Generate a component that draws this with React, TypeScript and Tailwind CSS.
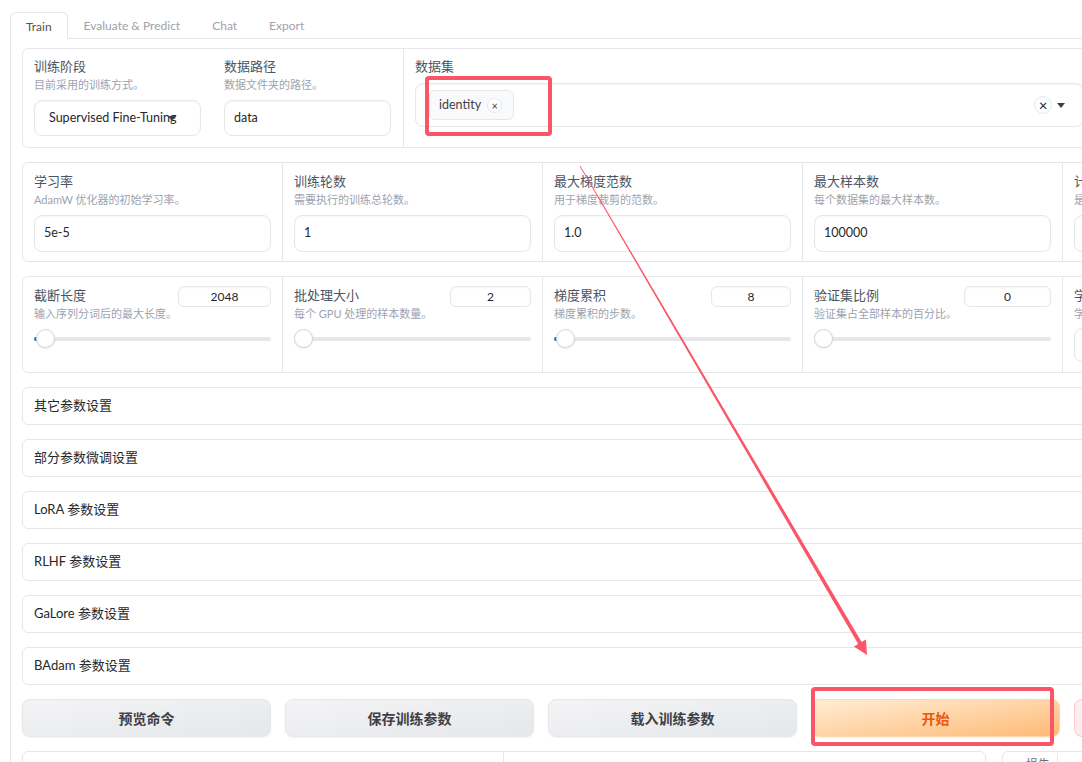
import React from "react";

function Label({ children }: { children: React.ReactNode }) {
  return <div className="h-5 leading-5 text-[13px] text-[#4b5563] whitespace-nowrap">{children}</div>;
}

function Desc({ children }: { children: React.ReactNode }) {
  return <div className="h-[17px] leading-[17px] text-[11px] text-[#9ca3af] whitespace-nowrap">{children}</div>;
}

function Caret() {
  return (
    <svg width="8" height="5" viewBox="0 0 8 5" className="shrink-0">
      <polygon points="0,0 8,0 4,5" fill="#3f3f46" />
    </svg>
  );
}

function TextCol({ label, desc, value, dropdown }: { label: string; desc: string; value: string; dropdown?: boolean }) {
  return (
    <div className="flex-1 min-w-0 px-[11px] pt-[8px]">
      <Label>{label}</Label>
      <Desc>{desc}</Desc>
      <div
        className={
          "mt-[7px] h-[37px] rounded-lg border border-[#e5e7eb] shadow-[inset_0_1px_2px_rgba(0,0,0,0.04)] flex items-center text-[12.5px] text-[#27272a] whitespace-nowrap overflow-hidden " +
          (dropdown ? "px-[14px]" : "px-[9px]")
        }
      >
        {value}
      </div>
    </div>
  );
}

function SliderCol({ label, desc, value, w, fill }: { label: string; desc: string; value: string; w: string; fill?: boolean }) {
  return (
    <div className="flex-1 min-w-0 px-[11px] pt-[8px]">
      <div className="flex justify-between h-5">
        <Label>{label}</Label>
        <div
          className={
            "mt-px h-[21px] rounded-md border border-[#e5e7eb] shadow-[inset_0_1px_2px_rgba(0,0,0,0.04)] flex items-center justify-center text-[12px] text-[#27272a] " +
            w
          }
        >
          {value}
        </div>
      </div>
      <Desc>{desc}</Desc>
      <div className="mt-[7px] h-[19px] relative flex items-center">
        <div className="h-[4px] w-full rounded-full bg-[#e5e7eb]" />
        {fill ? <div className="absolute left-0 top-[7.5px] h-[4px] w-[5px] rounded-l-full bg-[#2563eb]" /> : null}
        <div
          className={
            "absolute top-0 h-[19px] w-[19px] rounded-full bg-white border border-[#d1d5db] shadow-[0_1px_2px_rgba(0,0,0,0.08)] " +
            (fill ? "left-[2px]" : "left-0")
          }
        />
      </div>
    </div>
  );
}

function Accordion({ title }: { title: string }) {
  return (
    <div className="h-[38px] rounded-md border border-[#e5e7eb] flex items-center pl-[11px] text-[13px] text-[#27272a] bg-white">
      {title}
    </div>
  );
}

export default function App() {
  return (
    <div className="relative w-[1082px] h-[762px] overflow-hidden bg-white font-['Lato','Noto_Sans_CJK_SC',sans-serif]">
      <div className="w-[1400px] pt-[12px] pl-[10px]">
        {/* Tabs */}
        <div className="flex h-[27px] border-b border-[#e5e7eb] text-[12px]">
          <div className="self-start h-[27px] px-[15px] flex items-center pt-px border border-b-0 border-[#e5e7eb] rounded-t-[6px] bg-white text-[#57534e]">
            Train
          </div>
          <div className="h-[26px] px-4 pt-px flex items-center text-[#a1a1aa]">Evaluate &amp; Predict</div>
          <div className="h-[26px] px-4 pt-px flex items-center text-[#a1a1aa]">Chat</div>
          <div className="h-[26px] px-4 pt-px flex items-center text-[#a1a1aa]">Export</div>
        </div>

        {/* Panel */}
        <div className="border-l border-[#e5e7eb] pl-[11px] pt-[9px] h-[740px]">
          <div className="w-[1301px] flex flex-col gap-[14px]">
            {/* Row 1 */}
            <div className="flex h-[100px] rounded-md border border-[#e5e7eb]">
              <div className="w-[189px] pl-[11px] pt-[7px]">
                <Label>训练阶段</Label>
                <Desc>目前采用的训练方式。</Desc>
                <div className="relative mt-[7px] h-[36px] w-[167px] rounded-lg border border-[#e5e7eb] shadow-[inset_0_1px_2px_rgba(0,0,0,0.04)] flex items-center pl-[14px] text-[12.5px] text-[#27272a]">
                  <div className="w-[134px] overflow-hidden whitespace-nowrap">Supervised Fine-Tuning</div>
                  <div className="absolute right-[24px] top-[15px]">
                    <Caret />
                  </div>
                </div>
              </div>
              <div className="w-[191px] pl-[12px] pt-[7px]">
                <Label>数据路径</Label>
                <Desc>数据文件夹的路径。</Desc>
                <div className="mt-[7px] h-[36px] w-[167px] rounded-lg border border-[#e5e7eb] shadow-[inset_0_1px_2px_rgba(0,0,0,0.04)] flex items-center px-[9px] text-[12.5px] text-[#27272a]">
                  data
                </div>
              </div>
              <div className="w-[693px] border-l border-[#e5e7eb] pl-[11px] pr-[12px] pt-[7px]">
                <Label>数据集</Label>
                <div className="mt-[7px] h-[44px] rounded-lg border border-[#e5e7eb] shadow-[inset_0_1px_2px_rgba(0,0,0,0.04)] flex items-center justify-between pl-[13px] pr-[18px]">
                  <div className="h-[30px] flex items-center gap-[6px] pl-[9px] pr-[11px] rounded-md border border-[#e5e7eb] bg-[#f9fafb] text-[12.5px] text-[#3f3f46]">
                    <span>identity</span>
                    <span className="h-[15px] w-[15px] rounded-full border border-[#e5e7eb] bg-white flex items-center justify-center text-[11px] leading-none text-[#3f3f46]">
                      ×
                    </span>
                  </div>
                  <div className="flex items-center gap-[5px]">
                    <span className="h-[18px] w-[18px] rounded-full border border-[#e5e7eb] bg-white flex items-center justify-center text-[15px] leading-none text-[#27272a]">
                      ×
                    </span>
                    <Caret />
                  </div>
                </div>
              </div>
              <div className="flex-1 border-l border-[#e5e7eb]" />
            </div>

            {/* Row 2 */}
            <div className="flex h-[100px] rounded-md border border-[#e5e7eb] divide-x divide-[#e5e7eb]">
              <TextCol label="学习率" desc="AdamW 优化器的初始学习率。" value="5e-5" />
              <TextCol label="训练轮数" desc="需要执行的训练总轮数。" value="1" />
              <TextCol label="最大梯度范数" desc="用于梯度裁剪的范数。" value="1.0" />
              <TextCol label="最大样本数" desc="每个数据集的最大样本数。" value="100000" />
              <TextCol label="计算类型" desc="是否使用混合精度训练。" value="bf16" dropdown />
            </div>

            {/* Row 3 */}
            <div className="flex h-[97px] rounded-md border border-[#e5e7eb] divide-x divide-[#e5e7eb]">
              <SliderCol label="截断长度" desc="输入序列分词后的最大长度。" value="2048" w="w-[93px]" fill />
              <SliderCol label="批处理大小" desc="每个 GPU 处理的样本数量。" value="2" w="w-[81px]" />
              <SliderCol label="梯度累积" desc="梯度累积的步数。" value="8" w="w-[80px]" fill />
              <SliderCol label="验证集比例" desc="验证集占全部样本的百分比。" value="0" w="w-[87px]" />
              <div className="flex-1 min-w-0 px-[11px] pt-[8px]">
                <Label>学习率调节器</Label>
                <Desc>学习率调度器的名称。</Desc>
                <div className="mt-[6px] h-[34px] rounded-lg border border-[#e5e7eb] shadow-[inset_0_1px_2px_rgba(0,0,0,0.04)] flex items-center px-[14px] text-[12.5px] text-[#27272a]">
                  cosine
                </div>
              </div>
            </div>

            {/* Accordions */}
            <Accordion title="其它参数设置" />
            <Accordion title="部分参数微调设置" />
            <Accordion title="LoRA 参数设置" />
            <Accordion title="RLHF 参数设置" />
            <Accordion title="GaLore 参数设置" />
            <Accordion title="BAdam 参数设置" />

            {/* Buttons */}
            <div className="grid grid-cols-5 gap-[14px] h-[38px]">
              <button className="rounded-lg border border-[#e5e7eb] bg-gradient-to-br from-[#f4f4f5] to-[#e5e7eb] shadow-[0_1px_2px_rgba(0,0,0,0.05)] text-[14px] font-bold text-[#3f3f46]">
                预览命令
              </button>
              <button className="rounded-lg border border-[#e5e7eb] bg-gradient-to-br from-[#f4f4f5] to-[#e5e7eb] shadow-[0_1px_2px_rgba(0,0,0,0.05)] text-[14px] font-bold text-[#3f3f46]">
                保存训练参数
              </button>
              <button className="rounded-lg border border-[#e5e7eb] bg-gradient-to-br from-[#f4f4f5] to-[#e5e7eb] shadow-[0_1px_2px_rgba(0,0,0,0.05)] text-[14px] font-bold text-[#3f3f46]">
                载入训练参数
              </button>
              <button className="rounded-lg border border-[#fed7aa] bg-gradient-to-br from-[#ffedd5] to-[#fdba74] shadow-[0_1px_2px_rgba(0,0,0,0.05)] text-[14px] font-bold text-[#ea580c]">
                开始
              </button>
              <button className="rounded-lg border border-[#fecaca] bg-gradient-to-br from-[#fef2f2] to-[#fee2e2] text-[14px] font-bold text-[#dc2626]">
                中断
              </button>
            </div>

            {/* Bottom row */}
            <div className="flex gap-[16px]">
              <div className="w-[964px] h-[80px] flex rounded-md border border-[#e5e7eb] divide-x divide-[#e5e7eb]">
                <div className="w-[481px] pl-[11px] pt-[12px]">
                  <Label>输出目录</Label>
                </div>
                <div className="flex-1 pl-[11px] pt-[12px]">
                  <Label>配置路径</Label>
                </div>
              </div>
              <div className="flex-1 h-[80px] rounded-md border border-[#e5e7eb]">
                <div className="inline-flex items-center gap-[6px] h-[26px] px-[7px] border-r border-b border-[#e5e7eb] rounded-br-md text-[12px] text-[#6b7280]">
                  <svg width="10" height="10" viewBox="0 0 10 10">
                    <path d="M1 9 L4 5 L6 7 L9 2" stroke="#9ca3af" strokeWidth="1.2" fill="none" />
                  </svg>
                  <span>损失</span>
                </div>
              </div>
            </div>
          </div>
        </div>
      </div>

      {/* Annotation overlays */}
      <div className="absolute left-[425px] top-[76px] w-[127px] h-[60px] border-4 border-[#f95668] rounded-[4px] pointer-events-none" />
      <div className="absolute left-[811px] top-[687px] w-[243px] h-[59px] border-4 border-[#f95668] rounded-[4px] pointer-events-none" />
      <svg className="absolute left-0 top-0 pointer-events-none" width="1082" height="762" viewBox="0 0 1082 762">
        <polygon
          points="580.34,165.8 861.6,641.9 865.9,639.4 867,655 853.9,646.4 858.2,643.9 579.66,166.2"
          fill="#f95668"
        />
      </svg>
    </div>
  );
}
